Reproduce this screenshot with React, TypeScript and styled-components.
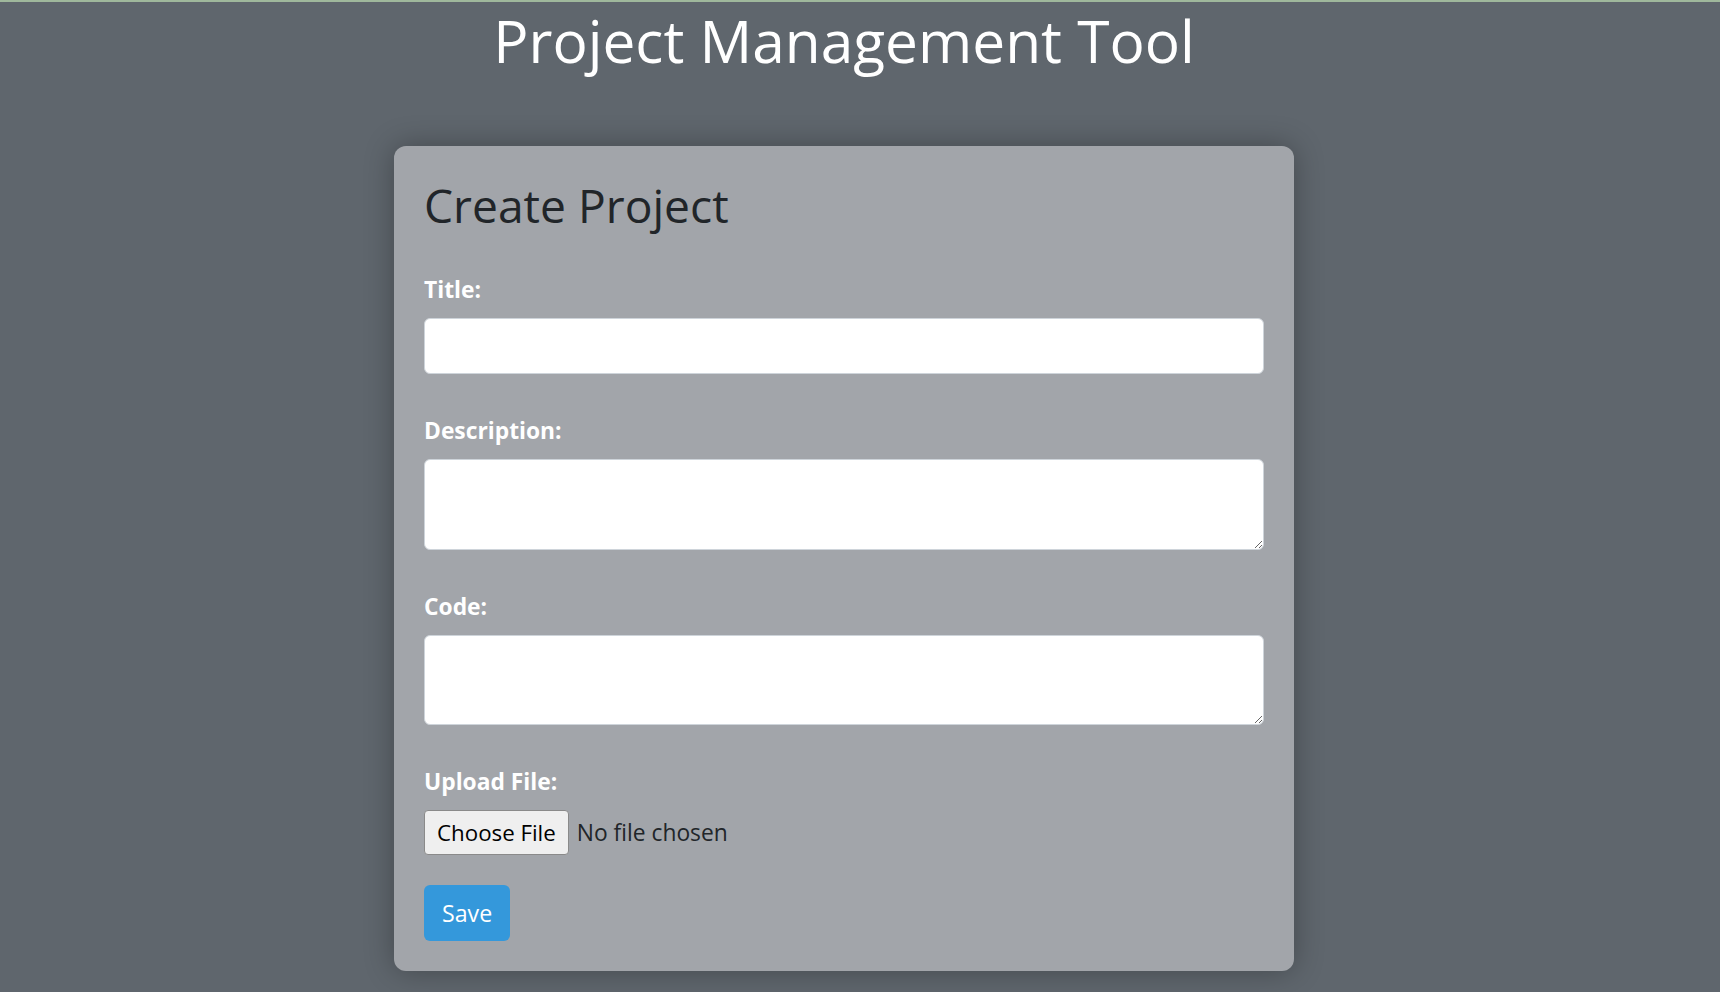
import React from "react";
import styled, { createGlobalStyle } from "styled-components";

const GlobalStyle = createGlobalStyle`
  html, body {
    margin: 0;
    padding: 0;
    background: #5f666d;
  }
  body {
    border-top: 2px solid #9fb89c;
    font-family: "Open Sans", "Noto Sans", sans-serif;
    color: #212529;
  }
  * { box-sizing: border-box; }
`;

const Page = styled.div`
  width: 1688px;
  min-height: 990px;
  display: flex;
  flex-direction: column;
  align-items: center;
`;

const AppTitle = styled.h1`
  margin: 4px 0 0;
  font-size: 58.6px;
  line-height: 69.6px;
  font-weight: 400;
  color: #ffffff;
  text-align: center;
`;

const Card = styled.div`
  width: 900px;
  margin-top: 70px;
  padding: 30px;
  background: #a2a5aa;
  border-radius: 12px;
  box-shadow: 0 0 30px rgba(0, 0, 0, 0.3);
  display: flex;
  flex-direction: column;
`;

const CardTitle = styled.h2`
  margin: 0;
  font-size: 46.2px;
  line-height: 60px;
  font-weight: 400;
  color: #212529;
`;

const Form = styled.form`
  display: flex;
  flex-direction: column;
  margin-top: 36px;
`;

const Group = styled.div<{ $last?: boolean }>`
  display: flex;
  flex-direction: column;
  margin-bottom: ${(p) => (p.$last ? "30px" : "39px")};
`;

const Label = styled.label`
  font-size: 22.8px;
  line-height: 34px;
  padding-top: 1px;
  font-weight: 700;
  color: #ffffff;
  margin-bottom: 11px;
`;

const TextInput = styled.input`
  width: 100%;
  height: 56px;
  padding: 9px 18px;
  font-family: inherit;
  font-size: 23px;
  color: #212529;
  background: #ffffff;
  border: 1px solid #ced4da;
  border-radius: 6px;
  outline: none;
`;

const TextArea = styled.textarea<{ $h: number }>`
  width: 100%;
  height: ${(p) => p.$h}px;
  padding: 9px 18px;
  font-family: inherit;
  font-size: 23px;
  color: #212529;
  background: #ffffff;
  border: 1px solid #ced4da;
  border-radius: 6px;
  outline: none;
  resize: vertical;
  display: block;
`;

const FileInput = styled.input`
  font-family: inherit;
  font-size: 22.8px;
  color: #212529;
  height: 45px;
  line-height: 45px;

  &::file-selector-button {
    font-family: inherit;
    font-size: 22.3px;
    color: #000000;
    height: 45px;
    padding: 0 12px;
    margin-right: 8px;
    background: #efefef;
    border: 1px solid #8a8a8a;
    border-radius: 4px;
    cursor: pointer;
  }
`;

const SaveButton = styled.button`
  align-self: flex-start;
  height: 56px;
  padding: 0 18px;
  font-family: inherit;
  font-size: 23.2px;
  color: #ffffff;
  background: #3498db;
  border: none;
  border-radius: 6px;
  cursor: pointer;
`;

export default function App() {
  return (
    <>
      <GlobalStyle />
      <Page>
        <AppTitle>Project Management Tool</AppTitle>
        <Card>
          <CardTitle>Create Project</CardTitle>
          <Form onSubmit={(e) => e.preventDefault()}>
            <Group>
              <Label htmlFor="title">Title:</Label>
              <TextInput id="title" type="text" />
            </Group>
            <Group>
              <Label htmlFor="description">Description:</Label>
              <TextArea id="description" $h={91} />
            </Group>
            <Group>
              <Label htmlFor="code">Code:</Label>
              <TextArea id="code" $h={90} />
            </Group>
            <Group $last>
              <Label htmlFor="file">Upload File:</Label>
              <FileInput id="file" type="file" />
            </Group>
            <SaveButton type="submit">Save</SaveButton>
          </Form>
        </Card>
      </Page>
    </>
  );
}
